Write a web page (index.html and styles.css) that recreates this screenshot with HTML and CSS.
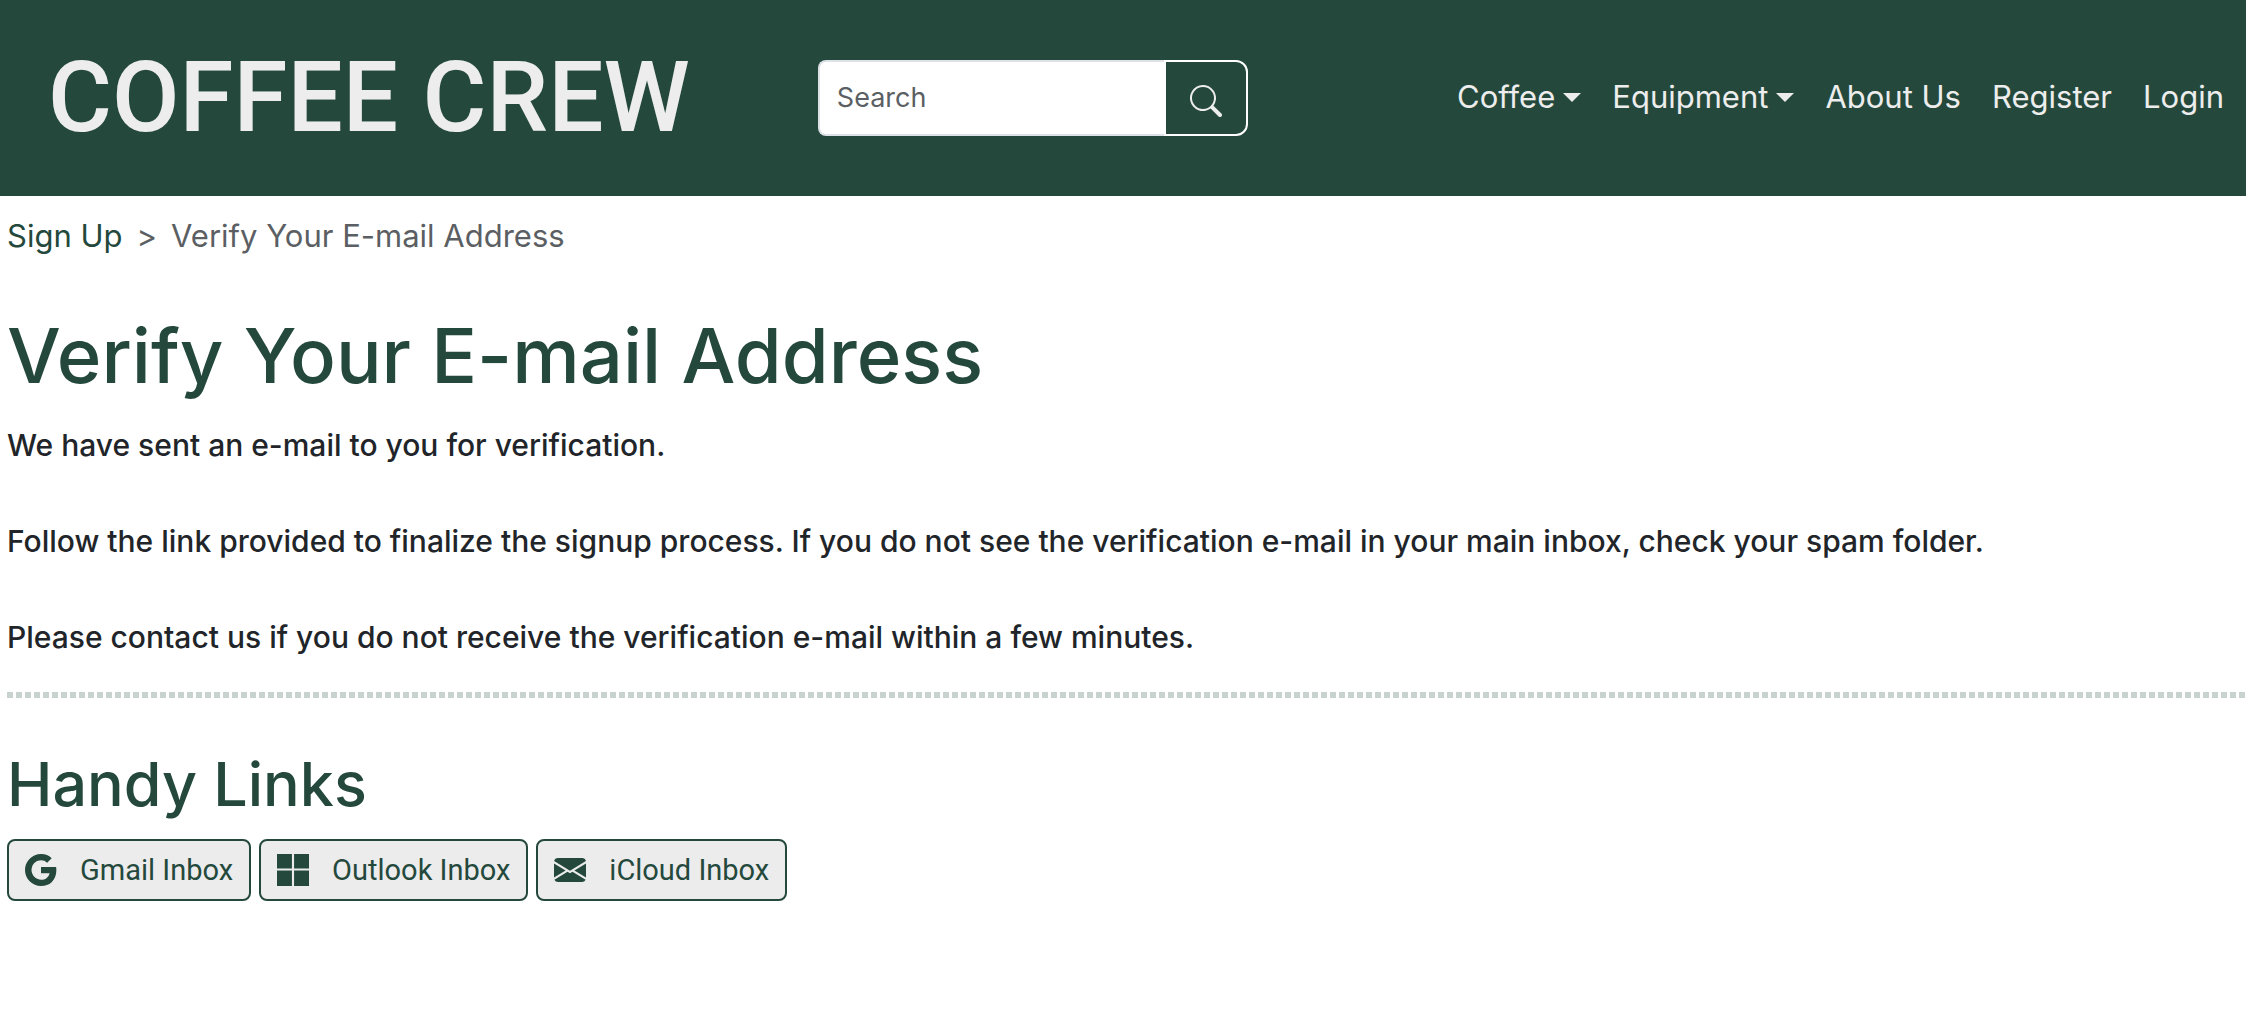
FILE: index.html
```html
<!DOCTYPE html>
<html lang="en">
<head>
  <meta charset="utf-8">
  <meta name="viewport" content="width=device-width, initial-scale=1">
  <title>Verify Your E-mail Address | Coffee Crew</title>
  <link rel="stylesheet" href="styles.css">
</head>
<body>
  <header class="site-header">
    <a class="brand" href="#">COFFEE CREW</a>
    <form class="search" role="search">
      <input class="search-input" type="search" placeholder="Search" aria-label="Search">
      <button class="search-button" type="submit" aria-label="Submit search">
        <svg class="icon" viewBox="0 0 16 16" fill="currentColor" aria-hidden="true"><path d="M11.742 10.344a6.500 6.500 0 1 0-1.397 1.398h-.001c.030.040.062.078.098.115l3.850 3.850a1 1 0 0 0 1.415-1.414l-3.850-3.850a1.007 1.007 0 0 0-.115-.100zM12 6.500a5.500 5.500 0 1 1-11 0 5.500 5.500 0 0 1 11 0"/></svg>
      </button>
    </form>
    <nav class="main-nav" aria-label="Main">
      <a class="nav-link has-menu" href="#">Coffee</a>
      <a class="nav-link has-menu" href="#">Equipment</a>
      <a class="nav-link" href="#">About Us</a>
      <a class="nav-link" href="#">Register</a>
      <a class="nav-link" href="#">Login</a>
    </nav>
  </header>
  <main class="content">
    <nav class="breadcrumb" aria-label="Breadcrumb">
      <a class="crumb-link" href="#">Sign Up</a>
      <span class="crumb-separator">&gt;</span>
      <span aria-current="page">Verify Your E-mail Address</span>
    </nav>
    <h1 class="page-title">Verify Your E-mail Address</h1>
    <div class="message">
      <p>We have sent an e-mail to you for verification.</p>
      <p>Follow the link provided to finalize the signup process. If you do not see the verification e-mail in your main inbox, check your spam folder.</p>
      <p>Please contact us if you do not receive the verification e-mail within a few minutes.</p>
    </div>
    <hr class="divider">
    <h2 class="section-title">Handy Links</h2>
    <div class="inbox-links">
      <a class="inbox-link" href="#">
        <svg class="icon" viewBox="0 0 16 16" fill="currentColor" aria-hidden="true"><path d="M15.545 6.558a9.420 9.420 0 0 1 .139 1.626c0 2.434-.870 4.492-2.384 5.885h.002C11.978 15.292 10.158 16 8 16A8 8 0 1 1 8 0a7.689 7.689 0 0 1 5.352 2.082l-2.284 2.284A4.347 4.347 0 0 0 8 3.166c-2.087 0-3.860 1.408-4.492 3.304a4.792 4.792 0 0 0 0 3.063h.003c.635 1.893 2.405 3.301 4.492 3.301 1.078 0 2.004-.276 2.722-.764h-.003a3.702 3.702 0 0 0 1.599-2.431H8v-3.080z"/></svg>
        Gmail Inbox
      </a>
      <a class="inbox-link" href="#">
        <svg class="icon" viewBox="0 0 16 16" fill="currentColor" aria-hidden="true"><path d="M7.462 0H0v7.190h7.462zM16 0H8.538v7.190H16zM7.462 8.211H0V16h7.462zm8.538 0H8.538V16H16z"/></svg>
        Outlook Inbox
      </a>
      <a class="inbox-link" href="#">
        <svg class="icon" viewBox="0 0 16 16" fill="currentColor" aria-hidden="true"><path d="M.050 3.555A2 2 0 0 1 2 2h12a2 2 0 0 1 1.950 1.555L8 8.414zM0 4.697v7.104l5.803-3.558zM6.761 8.830l-6.570 4.027A2 2 0 0 0 2 14h12a2 2 0 0 0 1.808-1.144l-6.570-4.027L8 9.586zm3.436-.586L16 11.801V4.697z"/></svg>
        iCloud Inbox
      </a>
    </div>
  </main>
</body>
</html>
```
FILE: styles.css
```css
:root {
  --green: #24493c;
  --light: #ededed;
  --text: #212529;
  --muted: #5b5f63;
}

* {
  box-sizing: border-box;
}

body {
  margin: 0;
  background: #fff;
  color: var(--text);
  font: 31px/48px Inter, sans-serif;
}

a {
  color: inherit;
  text-decoration: none;
}

h1,
h2,
p {
  margin: 0;
}

.icon {
  display: block;
  flex: none;
  width: 32px;
  height: 32px;
}

.site-header {
  display: flex;
  align-items: center;
  min-height: 196px;
  padding: 24px 22px 24px 48px;
  background: var(--green);
  color: var(--light);
}

.brand {
  margin-right: 128px;
  font: 500 98px/146px Roboto, sans-serif;
  white-space: nowrap;
}

.search {
  display: flex;
  width: 430px;
  height: 76px;
}

.search-input {
  flex: 1;
  min-width: 0;
  padding: 0 17px;
  border: 2px solid #dee2e6;
  border-right: 0;
  border-radius: 8px 0 0 8px;
  background: #fff;
  color: var(--text);
  font: 27px/40px Inter, sans-serif;
}

.search-input::placeholder {
  color: var(--muted);
  opacity: 1;
}

.search-button {
  display: flex;
  align-items: center;
  justify-content: center;
  width: 84px;
  padding: 6px 0 0;
  border: 2px solid #fff;
  border-radius: 0 12px 12px 0;
  background: var(--green);
  color: var(--light);
}

.main-nav {
  display: flex;
  gap: 31px;
  margin-left: auto;
  padding-bottom: 2px;
}

.nav-link {
  display: flex;
  align-items: center;
  gap: 8px;
  white-space: nowrap;
}

.has-menu::after {
  content: "";
  border: 9px solid transparent;
  border-top-color: currentColor;
  border-bottom: 0;
}

.content {
  padding: 16px 0 16px 7px;
}

.breadcrumb {
  display: flex;
  gap: 14px;
  color: var(--muted);
}

.crumb-link {
  color: var(--green);
}

.page-title,
.section-title {
  color: var(--green);
  font-weight: 500;
}

.page-title {
  margin-top: 47px;
  font-size: 76px;
  line-height: 96px;
}

.message {
  display: grid;
  gap: 48px;
  margin-top: 18px;
  font-size: 30px;
  font-weight: 500;
}

.divider {
  height: 6px;
  margin: 31px 0 0;
  border: 0;
  background: repeating-linear-gradient(to right, #c8d2ce 0 6px, #fff 6px 9px);
}

.section-title {
  margin-top: 47px;
  font-size: 61px;
  line-height: 78px;
}

.inbox-links {
  display: flex;
  flex-wrap: wrap;
  gap: 8px;
  margin-top: 16px;
}

.inbox-link {
  display: flex;
  align-items: center;
  gap: 23px;
  height: 62px;
  padding: 0 16px;
  border: 2px solid var(--green);
  border-radius: 8px;
  background: #ececec;
  color: var(--green);
  font: 29px/40px Roboto, sans-serif;
}
```
